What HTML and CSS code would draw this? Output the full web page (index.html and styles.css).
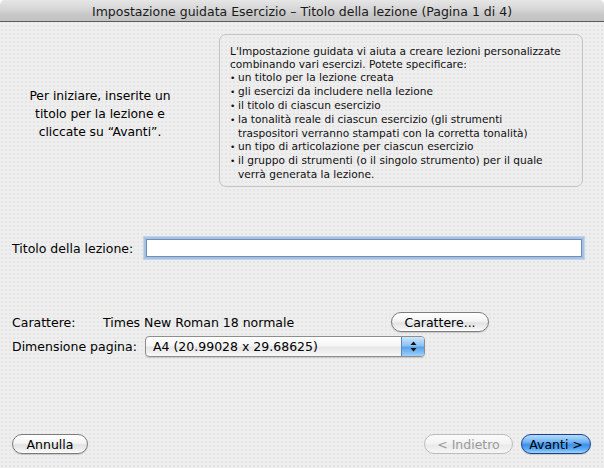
FILE: index.html
```html
<!DOCTYPE html>
<html lang="it">
<head>
<meta charset="utf-8">
<title>Impostazione guidata Esercizio</title>
<link rel="stylesheet" href="styles.css">
</head>
<body>
<div class="window">
  <div class="titlebar">Impostazione guidata Esercizio – Titolo della lezione (Pagina 1 di 4)</div>
  <div class="content">
    <div class="intro">
      <div class="intro-text">Per iniziare, inserite un titolo per la lezione e cliccate su “Avanti”.</div>
      <div class="infobox">
        <p>L'Impostazione guidata vi aiuta a creare lezioni personalizzate combinando vari esercizi. Potete specificare:</p>
        <ul>
          <li>un titolo per la lezione creata</li>
          <li>gli esercizi da includere nella lezione</li>
          <li>il titolo di ciascun esercizio</li>
          <li>la tonalità reale di ciascun esercizio (gli strumenti traspositori verranno stampati con la corretta tonalità)</li>
          <li>un tipo di articolazione per ciascun esercizio</li>
          <li>il gruppo di strumenti (o il singolo strumento) per il quale verrà generata la lezione.</li>
        </ul>
      </div>
    </div>
    <div class="title-row">
      <span class="label">Titolo della lezione:</span>
      <div class="field"></div>
    </div>
    <div class="font-row">
      <span class="label font-label">Carattere:</span>
      <span class="font-value">Times New Roman 18 normale</span>
      <span class="btn font-btn">Carattere...</span>
    </div>
    <div class="size-row">
      <span class="label">Dimensione pagina:</span>
      <div class="select">
        <span class="select-text">A4 (20.99028 x 29.68625)</span>
        <span class="select-arrows">
          <svg width="9" height="13" viewBox="0 0 9 13"><path d="M4.5 1.5 L7.5 5 L1.5 5 Z" fill="#111"/><path d="M4.5 11.5 L7.5 8 L1.5 8 Z" fill="#111"/></svg>
        </span>
      </div>
    </div>
  </div>
  <div class="footer">
    <span class="btn cancel-btn">Annulla</span>
    <span class="spacer"></span>
    <span class="btn back-btn">&lt; Indietro</span>
    <span class="btn next-btn">Avanti &gt;</span>
  </div>
</div>
</body>
</html>
```

FILE: styles.css
```css
html, body {
  margin: 0;
  padding: 0;
}

body {
  width: 604px;
  height: 468px;
  overflow: hidden;
  font-family: "DejaVu Sans", "Liberation Sans", sans-serif;
  color: #000;
}

.window {
  width: 604px;
  height: 468px;
  display: flex;
  flex-direction: column;
  background-color: #eeeeee;
  background-image: radial-gradient(circle, #e0e0e0 0.6px, transparent 0.9px);
  background-size: 4px 4px;
  border-radius: 5px 5px 0 0;
}

.titlebar {
  flex: none;
  height: 22px;
  box-sizing: border-box;
  padding-top: 1px;
  border-bottom: 1px solid #5a5a5a;
  border-radius: 5px 5px 0 0;
  background: linear-gradient(#e6e6e6, #d6d6d6 45%, #c8c8c8 70%, #c2c2c2);
  display: flex;
  align-items: center;
  justify-content: center;
  font-size: 12.5px;
  color: #1a1a1a;
}

.content {
  display: flex;
  flex-direction: column;
  padding: 12px 21px 0 12px;
}

.intro {
  display: flex;
  height: 153px;
}

.intro-text {
  width: 176px;
  margin-right: 31px;
  font-size: 12.3px;
  line-height: 18px;
  text-align: center;
  align-self: center;
  padding-top: 7px;
}

.infobox {
  width: 364px;
  box-sizing: border-box;
  border: 1px solid #c4c4c4;
  border-radius: 7px;
  padding: 10px 18px 0 10px;
  font-size: 10.6px;
  line-height: 13px;
  color: #111;
}

.infobox p {
  margin: 0;
}

.infobox ul {
  list-style: none;
  margin: 0;
  padding: 0;
}

.infobox li {
  padding-left: 8px;
  text-indent: -8px;
}

.infobox li::before {
  content: "•";
  display: inline-block;
  width: 8px;
  text-indent: 0;
  font-size: 9px;
}

.title-row {
  display: flex;
  align-items: center;
  margin-top: 50px;
  height: 22px;
}

.label {
  font-size: 12.5px;
  white-space: nowrap;
}

.title-row .label {
  width: 131px;
}

.field {
  width: 434px;
  height: 16px;
  margin-left: 3px;
  background: #fff;
  border: 1px solid #6f8fbb;
  box-shadow: 0 0 0 2px #a7c1e2, 0 0 0 3px #c3d5ec;
}

.font-row {
  display: flex;
  align-items: center;
  margin-top: 53px;
  height: 20px;
}

.font-label {
  width: 91px;
}

.font-value {
  font-size: 12.5px;
  width: 288px;
}

.btn {
  display: inline-flex;
  align-items: center;
  justify-content: center;
  box-sizing: border-box;
  height: 20px;
  border-radius: 10px;
  border: 1px solid #7c7c7c;
  background: linear-gradient(#ffffff, #f4f4f4 45%, #e2e2e2 55%, #f4f4f4 90%, #ffffff);
  font-size: 12.5px;
  color: #000;
  box-shadow: 0 1px 1px rgba(0,0,0,0.15);
}

.font-btn {
  width: 98px;
}

.size-row {
  display: flex;
  align-items: center;
  margin-top: 4px;
  height: 21px;
}

.size-row .label {
  width: 133px;
}

.select {
  width: 280px;
  height: 21px;
  box-sizing: border-box;
  display: flex;
  border: 1px solid #8e8e8e;
  border-radius: 4px;
  overflow: hidden;
  background: linear-gradient(#ffffff, #f6f6f6 45%, #e6e6e6 55%, #f8f8f8);
  box-shadow: 0 1px 1px rgba(0,0,0,0.15);
}

.select-text {
  flex: 1;
  font-size: 12.5px;
  padding-left: 7px;
  display: flex;
  align-items: center;
}

.select-arrows {
  width: 22px;
  border-left: 1px solid #5b86c0;
  background: linear-gradient(#cfe6fb, #8dc2f4 45%, #5aa2ea 55%, #9fd0fb);
  display: flex;
  align-items: center;
  justify-content: center;
}

.footer {
  margin-top: auto;
  display: flex;
  align-items: center;
  padding: 0 13px 14px 12px;
}

.spacer {
  flex: 1;
}

.cancel-btn {
  width: 76px;
}

.back-btn {
  width: 89px;
  color: #9a9a9a;
  border-color: #bcbcbc;
  background: linear-gradient(#fbfbfb, #f2f2f2 50%, #e9e9e9 55%, #f6f6f6);
  box-shadow: none;
}

.next-btn {
  width: 70px;
  margin-left: 8px;
  border-color: #1d3f8c;
  background: linear-gradient(#b6dbfb, #6fb3f5 40%, #3c8fe9 55%, #5eaef6 80%, #a3d6fd);
}
```
